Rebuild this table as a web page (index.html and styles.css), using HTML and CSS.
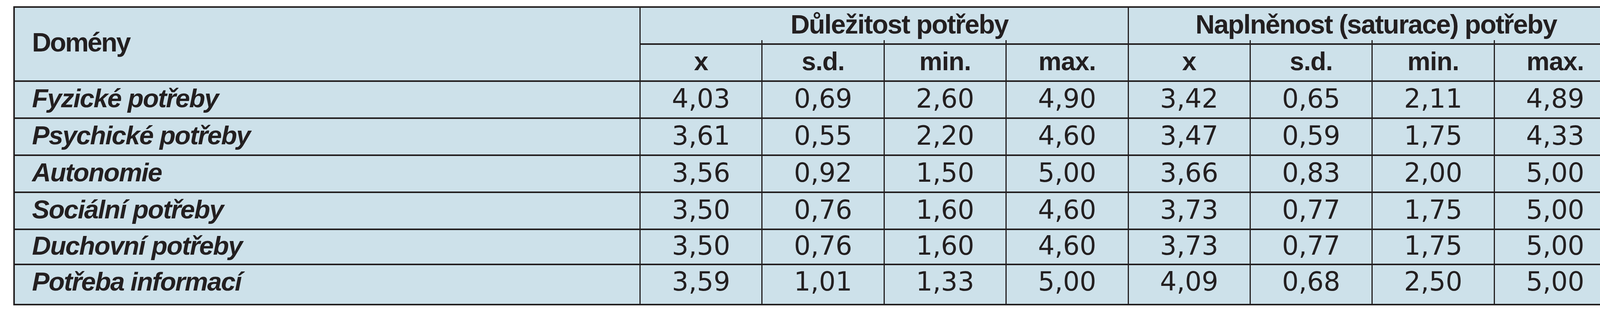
FILE: index.html
```html
<!DOCTYPE html>
<html lang="cs">
<head>
<meta charset="utf-8">
<title>Domény potřeb</title>
<link rel="stylesheet" href="styles.css">
</head>
<body>
<div class="grid" role="table">
  <div class="cell dom" role="columnheader">Domény</div>
  <div class="cell grp grp-a" role="columnheader">Důležitost potřeby</div>
  <div class="cell grp grp-b" role="columnheader">Naplněnost (saturace) potřeby</div>

  <div class="cell sub" role="columnheader">x</div>
  <div class="cell sub tick" role="columnheader">s.d.</div>
  <div class="cell sub tick" role="columnheader">min.</div>
  <div class="cell sub tick" role="columnheader">max.</div>
  <div class="cell sub" role="columnheader">x</div>
  <div class="cell sub tick" role="columnheader">s.d.</div>
  <div class="cell sub tick" role="columnheader">min.</div>
  <div class="cell sub tick" role="columnheader">max.</div>

  <div class="cell lab">Fyzické potřeby</div>
  <div class="cell num">4,03</div><div class="cell num">0,69</div><div class="cell num">2,60</div><div class="cell num">4,90</div>
  <div class="cell num">3,42</div><div class="cell num">0,65</div><div class="cell num">2,11</div><div class="cell num">4,89</div>

  <div class="cell lab">Psychické potřeby</div>
  <div class="cell num">3,61</div><div class="cell num">0,55</div><div class="cell num">2,20</div><div class="cell num">4,60</div>
  <div class="cell num">3,47</div><div class="cell num">0,59</div><div class="cell num">1,75</div><div class="cell num">4,33</div>

  <div class="cell lab">Autonomie</div>
  <div class="cell num">3,56</div><div class="cell num">0,92</div><div class="cell num">1,50</div><div class="cell num">5,00</div>
  <div class="cell num">3,66</div><div class="cell num">0,83</div><div class="cell num">2,00</div><div class="cell num">5,00</div>

  <div class="cell lab">Sociální potřeby</div>
  <div class="cell num">3,50</div><div class="cell num">0,76</div><div class="cell num">1,60</div><div class="cell num">4,60</div>
  <div class="cell num">3,73</div><div class="cell num">0,77</div><div class="cell num">1,75</div><div class="cell num">5,00</div>

  <div class="cell lab">Duchovní potřeby</div>
  <div class="cell num">3,50</div><div class="cell num">0,76</div><div class="cell num">1,60</div><div class="cell num">4,60</div>
  <div class="cell num">3,73</div><div class="cell num">0,77</div><div class="cell num">1,75</div><div class="cell num">5,00</div>

  <div class="cell lab last">Potřeba informací</div>
  <div class="cell num last">3,59</div><div class="cell num last">1,01</div><div class="cell num last">1,33</div><div class="cell num last">5,00</div>
  <div class="cell num last">4,09</div><div class="cell num last">0,68</div><div class="cell num last">2,50</div><div class="cell num last">5,00</div>
</div>
</body>
</html>
```

FILE: styles.css
```css
html, body {
  margin: 0;
  padding: 0;
  background: #ffffff;
}

body {
  padding: 16px 0 0 34px;
  color: #231f20;
  font-family: "Liberation Sans", Arial, sans-serif;
}

.grid {
  box-sizing: border-box;
  width: 4106px;
  display: grid;
  grid-template-columns: 1603px repeat(8, 1fr);
  grid-template-rows: 95px 95px 95px 95px 95px 95px 90px 103px;
  background: #cde1ea;
  border-right: 4px solid #231f20;
  border-bottom: 4px solid #231f20;
}

.cell {
  position: relative;
  box-sizing: border-box;
  display: flex;
  align-items: center;
  justify-content: center;
  border-top: 4px solid #231f20;
  border-left: 3px solid #231f20;
  white-space: nowrap;
  line-height: normal;
}

.dom,
.lab {
  justify-content: flex-start;
  border-left-width: 4px;
  padding-left: 44px;
}

.dom {
  grid-row: span 2;
  font-weight: bold;
  font-size: 68px;
  letter-spacing: -3px;
  padding-bottom: 11px;
}

.grp {
  grid-column: span 4;
  font-weight: bold;
  font-size: 68px;
  letter-spacing: -2px;
  padding-bottom: 7px;
}

.grp-a {
  padding-left: 78px;
}

.grp-b {
  padding-left: 20px;
}

.sub {
  font-weight: bold;
  font-size: 66px;
  letter-spacing: -1px;
  padding-bottom: 7px;
}

.tick::before {
  content: "";
  position: absolute;
  left: -3px;
  top: -12px;
  width: 3px;
  height: 12px;
  background: #231f20;
}

.lab {
  font-weight: bold;
  font-style: italic;
  font-size: 67px;
  letter-spacing: -2px;
  padding-bottom: 8px;
}

.num {
  font-family: "DejaVu Sans", Verdana, sans-serif;
  font-size: 67px;
  padding-bottom: 6px;
}

.cell.last {
  padding-bottom: 16px;
}

.num.last::after {
  content: "";
  position: absolute;
  left: -3px;
  bottom: -9px;
  width: 3px;
  height: 9px;
  background: #231f20;
}
```
